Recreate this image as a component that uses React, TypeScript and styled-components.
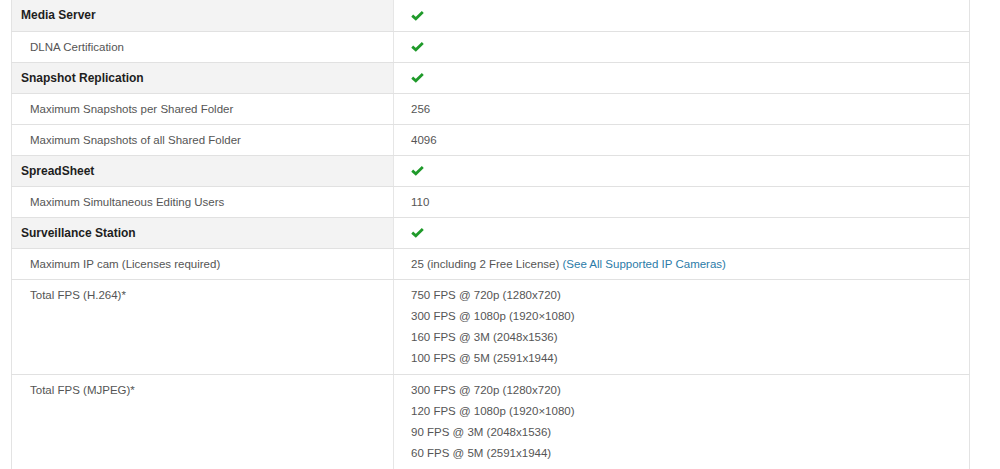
import styled, { createGlobalStyle } from 'styled-components';

const GlobalStyle = createGlobalStyle`
  body {
    margin: 0;
    background: #fff;
    font-family: "Liberation Sans", Arial, sans-serif;
  }
`;

// Layout
const Wrapper = styled.div`
  padding-left: 11px;
  width: 959px;
`;

const SpecTable = styled.table`
  width: 100%;
  border-collapse: collapse;
  table-layout: fixed;
  border-left: 1px solid #e3e3e3;
  border-right: 1px solid #e3e3e3;
  font-size: 11.5px;
  color: #555;
`;

const Row = styled.tr``;

const LabelCell = styled.td<{ $group?: boolean }>`
  width: 382px;
  height: 31px;
  box-sizing: border-box;
  padding: 0 0 0 ${p => (p.$group ? '9px' : '18px')};
  background: ${p => (p.$group ? '#f3f3f3' : '#fff')};
  border-bottom: 1px solid #e1e1e1;
  border-right: 1px solid #e6e6e6;
  vertical-align: middle;
  font-weight: ${p => (p.$group ? 'bold' : 'normal')};
  font-size: ${p => (p.$group ? '12px' : '11.5px')};
  color: ${p => (p.$group ? '#1e1e1e' : '#555')};
`;

const TallLabelCell = styled(LabelCell)`
  vertical-align: top;
  padding-top: 5px;
  line-height: 21px;
`;

const ValueCell = styled.td`
  height: 31px;
  box-sizing: border-box;
  padding: 0 0 0 17px;
  border-bottom: 1px solid #e1e1e1;
  vertical-align: middle;
`;

const TallValueCell = styled(ValueCell)`
  vertical-align: top;
  padding-top: 5px;
  padding-bottom: 5px;
  line-height: 21px;
`;

const Line = styled.div``;

const Link = styled.a`
  color: #2b7ba8;
  text-decoration: none;
`;

const CheckIcon = styled.svg`
  display: block;
  width: 13px;
  height: 11px;
`;

function Check() {
  return (
    <CheckIcon viewBox="0 0 13 11">
      <path d="M1.2 5.6 L4.8 8.8 L11.8 2" fill="none" stroke="#1f9a2a" strokeWidth="2.8" strokeLinejoin="miter" />
    </CheckIcon>
  );
}

// Dados
type Spec = {
  label: string;
  group?: boolean;
  value?: string;
  check?: boolean;
  lines?: string[];
  link?: string;
};

const SPECS: Spec[] = [
  { label: 'Media Server', group: true, check: true },
  { label: 'DLNA Certification', check: true },
  { label: 'Snapshot Replication', group: true, check: true },
  { label: 'Maximum Snapshots per Shared Folder', value: '256' },
  { label: 'Maximum Snapshots of all Shared Folder', value: '4096' },
  { label: 'SpreadSheet', group: true, check: true },
  { label: 'Maximum Simultaneous Editing Users', value: '110' },
  { label: 'Surveillance Station', group: true, check: true },
  { label: 'Maximum IP cam (Licenses required)', value: '25 (including 2 Free License) ', link: '(See All Supported IP Cameras)' },
  {
    label: 'Total FPS (H.264)*',
    lines: [
      '750 FPS @ 720p (1280x720)',
      '300 FPS @ 1080p (1920×1080)',
      '160 FPS @ 3M (2048x1536)',
      '100 FPS @ 5M (2591x1944)',
    ],
  },
  {
    label: 'Total FPS (MJPEG)*',
    lines: [
      '300 FPS @ 720p (1280x720)',
      '120 FPS @ 1080p (1920×1080)',
      '90 FPS @ 3M (2048x1536)',
      '60 FPS @ 5M (2591x1944)',
    ],
  },
];

export default function App() {
  return (
    <>
      <GlobalStyle />
      <Wrapper>
        <SpecTable>
          <tbody>
            {SPECS.map(spec =>
              spec.lines ? (
                <Row key={spec.label}>
                  <TallLabelCell $group={spec.group}>{spec.label}</TallLabelCell>
                  <TallValueCell>
                    {spec.lines.map(l => (
                      <Line key={l}>{l}</Line>
                    ))}
                  </TallValueCell>
                </Row>
              ) : (
                <Row key={spec.label}>
                  <LabelCell $group={spec.group}>{spec.label}</LabelCell>
                  <ValueCell>
                    {spec.check ? <Check /> : spec.value}
                    {spec.link && <Link href="#">{spec.link}</Link>}
                  </ValueCell>
                </Row>
              )
            )}
          </tbody>
        </SpecTable>
      </Wrapper>
    </>
  );
}
